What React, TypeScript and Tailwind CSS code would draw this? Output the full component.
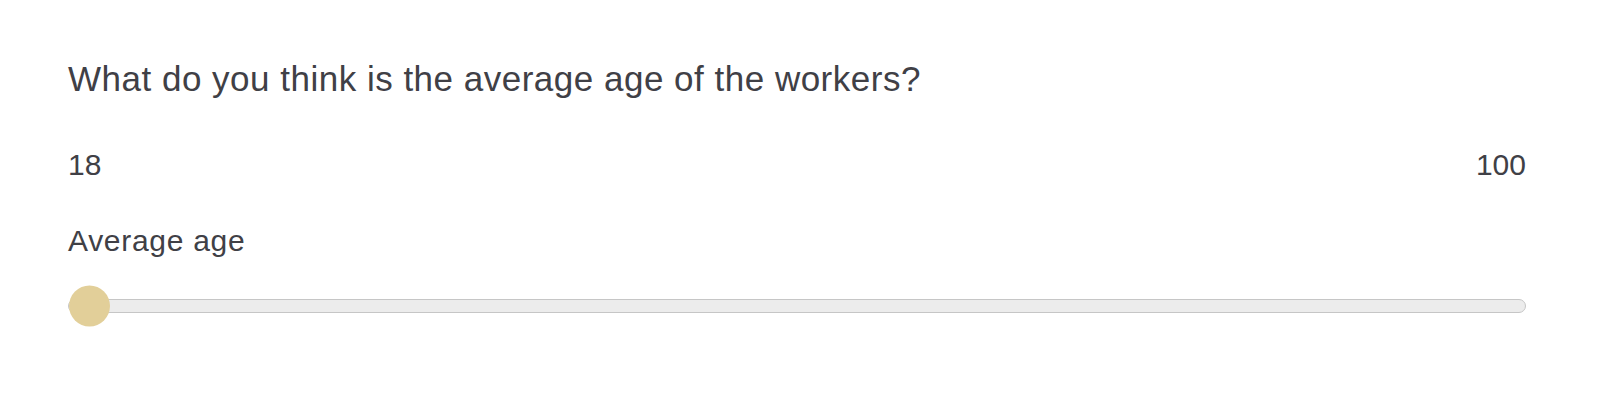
import { useState } from "react";

export default function App() {
  const min = 18;
  const max = 100;
  const [value] = useState(18);
  const pct = ((value - min) / (max - min)) * 100;

  return (
    <div className="w-[1604px] h-[408px] bg-white pl-[68px] pr-[78px] pt-[59px] font-['Liberation_Sans',Arial,sans-serif] text-[#404046]">
      <h2 className="text-[35px] leading-[40px] font-normal tracking-[0.5px]">What do you think is the average age of the workers?</h2>

      <div className="flex justify-between mt-[48px] text-[30px] leading-[36px]">
        <span>{min}</span>
        <span>{max}</span>
      </div>

      <label className="block mt-[40px] text-[30px] leading-[36px] tracking-[0.7px]">Average age</label>

      <div className="relative mt-[40px] h-[14px] rounded-full border border-[#c6c6c6] bg-[#ececec]">
        <div
          className="absolute top-1/2 -translate-y-1/2 w-[41px] h-[41px] rounded-full bg-[#e2cf99]"
          style={{ left: `calc(${pct}% - ${pct * 0.41}px)` }}
        />
      </div>
    </div>
  );
}
